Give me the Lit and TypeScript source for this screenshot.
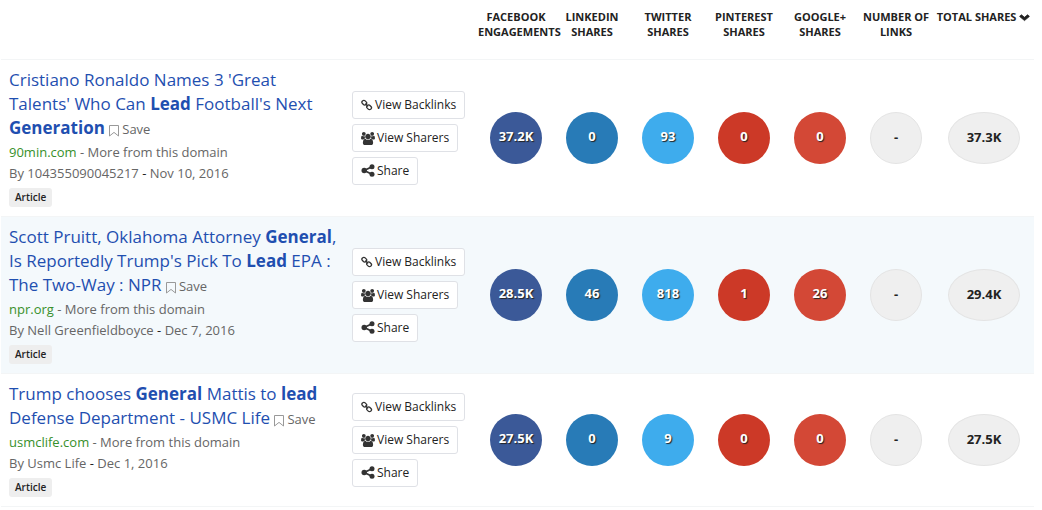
import { LitElement, html, css, svg } from "lit";
import { customElement, property } from "lit/decorators.js";

interface Story {
  title: Array<string | { hit: string }>;
  domain: string;
  author: string;
  date: string;
  shares: string[];
  links: string;
  total: string;
}

const NETWORKS = [
  { key: "facebook", label: "Facebook Engagements" },
  { key: "linkedin", label: "LinkedIn Shares" },
  { key: "twitter", label: "Twitter Shares" },
  { key: "pinterest", label: "Pinterest Shares" },
  { key: "google", label: "Google+ Shares" },
];

const STORIES: Story[] = [
  {
    title: ["Cristiano Ronaldo Names 3 'Great Talents' Who Can ", { hit: "Lead" }, " Football's Next ", { hit: "Generation" }],
    domain: "90min.com",
    author: "104355090045217",
    date: "Nov 10, 2016",
    shares: ["37.2K", "0", "93", "0", "0"],
    links: "-",
    total: "37.3K",
  },
  {
    title: ["Scott Pruitt, Oklahoma Attorney ", { hit: "General" }, ", Is Reportedly Trump's Pick To ", { hit: "Lead" }, " EPA : The Two-Way : NPR"],
    domain: "npr.org",
    author: "Nell Greenfieldboyce",
    date: "Dec 7, 2016",
    shares: ["28.5K", "46", "818", "1", "26"],
    links: "-",
    total: "29.4K",
  },
  {
    title: ["Trump chooses ", { hit: "General" }, " Mattis to ", { hit: "lead" }, " Defense Department - USMC Life"],
    domain: "usmclife.com",
    author: "Usmc Life",
    date: "Dec 1, 2016",
    shares: ["27.5K", "0", "9", "0", "0"],
    links: "-",
    total: "27.5K",
  },
];

const ICONS = {
  bookmark: {
    box: "0 0 11 13",
    width: 11,
    height: 13,
    art: svg`<path d="M.5 1.500h9v10.500L5 8.400.5 12z" fill="none" stroke="#999" stroke-width="1"/>`,
  },
  link: {
    box: "0 0 12 12",
    width: 12,
    height: 12,
    art: svg`<g fill="none" stroke="#333" stroke-width="1.300" stroke-linecap="round">
      <rect x="-2.500" y="-1.900" width="5" height="3.800" rx="1.800" transform="translate(3.300 3.700) rotate(45)"/>
      <rect x="-2.500" y="-1.900" width="5" height="3.800" rx="1.800" transform="translate(8.100 8.300) rotate(45)"/>
      <path d="M4.700 5l2 2"/></g>`,
  },
  users: {
    box: "0 0 1920 1792",
    width: 14,
    height: 13,
    art: svg`<path fill="#333" d="M593 896q-162 5-265 128H194q-82 0-138-40.500T0 865q0-353 124-353 6 0 43.500 21t97.500 42.500T384 597q67 0 133-23-5 37-5 66 0 139 81 256zm1071 637q0 120-73 189.500t-194 69.500H523q-121 0-194-69.500T256 1533q0-53 3.500-103.500t14-109T300 1212t43-97.500 62-81 85.500-53.500T602 960q10 0 43 21.500t73 48 107 48 135 21.500 135-21.500 107-48 73-48 43-21.500q61 0 111.500 20t85.500 53.500 62 81 43 97.500 26.500 108.500 14 109 3.500 103.500zM640 256q0 106-75 181t-181 75-181-75-75-181 75-181T384 0t181 75 75 181zm704 384q0 159-112.500 271.500T960 1024 688.500 911.500 576 640t112.500-271.500T960 256t271.500 112.500T1344 640zm576 225q0 78-56 118.500t-138 40.500h-134q-103-123-265-128 81-117 81-256 0-29-5-66 66 23 133 23 59 0 119-21.500t97.500-42.500 43.500-21q124 0 124 353zm-128-609q0 106-75 181t-181 75-181-75-75-181 75-181 181-75 181 75 75 181z"/>`,
  },
  share: {
    box: "0 0 14 14",
    width: 14,
    height: 14,
    art: svg`<g fill="#333"><circle cx="3.200" cy="6.500" r="2.700"/><circle cx="11" cy="2.700" r="2.500"/><circle cx="11" cy="10.300" r="2.500"/></g>
      <path d="M11 2.700L3.200 6.500 11 10.300" fill="none" stroke="#333" stroke-width="1.800"/>`,
  },
  chevron: {
    box: "0 0 12 8",
    width: 12,
    height: 8,
    art: svg`<path d="M.6 2.400L2.400.8l3.100 2.500L8.600.8l1.800 1.600L5.500 6.600z" fill="#222" stroke="#222" stroke-width=".8" stroke-linejoin="round"/>`,
  },
};

const icon = (name: keyof typeof ICONS) => {
  const i = ICONS[name];
  return html`<svg class="icon ${name}" viewBox=${i.box} width=${i.width} height=${i.height} aria-hidden="true">${i.art}</svg>`;
};

@customElement("app-root")
export class AppRoot extends LitElement {
  @property({ attribute: false }) stories: Story[] = STORIES;

  static styles = css`
    :host {
      display: block;
      padding: 0 8px 0 1px;
      background: #fff;
      color: #222;
      font: 13px/21px "Open Sans", "Noto Sans", sans-serif;
    }
    a { text-decoration: none; color: inherit; }
    button { font: inherit; color: inherit; cursor: pointer; }
    table { width: 100%; border-spacing: 0; table-layout: fixed; }
    .col-actions { width: 134px; }
    .col-count { width: 76px; }
    .col-total { width: 100px; }
    th {
      height: 50px;
      padding: 9px 0 0;
      vertical-align: top;
      font-size: 11px;
      line-height: 15px;
      font-weight: 700;
      text-transform: uppercase;
    }
    .sort {
      padding: 0;
      border: 0;
      background: none;
      font-weight: 700;
      text-transform: uppercase;
      white-space: nowrap;
    }
    td { padding: 8px 0; border-top: 1px solid #f3f5f6; vertical-align: middle; }
    tbody tr:last-child td { border-bottom: 1px solid #f3f5f6; }
    tbody tr:nth-child(even) { background: #f4f9fc; }
    .story { padding: 8px 4px 9px 8px; }
    .title { margin: 0 0 2px; font-size: 17px; line-height: 24px; font-weight: 400; }
    .title a { color: #1f4fb0; }
    .save { padding: 0; border: 0; background: none; font-size: 13px; line-height: 20px; color: #666; white-space: nowrap; }
    .icon { vertical-align: middle; }
    .bookmark { margin-right: 2px; }
    .meta { margin: 0; color: #666; }
    .domain { color: #37902b; }
    .dash { color: #222; }
    .tag {
      display: block;
      width: fit-content;
      margin-top: 4px;
      padding: 0 6px;
      border-radius: 3px;
      background: #eee;
      font-size: 10px;
      line-height: 19px;
      font-weight: 600;
    }
    .actions { display: flex; flex-direction: column; align-items: flex-start; gap: 5px; padding-left: 8px; }
    .action {
      display: flex;
      align-items: center;
      gap: 2px;
      height: 28px;
      padding: 0 8px;
      border: 1px solid #dfe1e6;
      border-radius: 3px;
      background: #fff;
      font-size: 12px;
      line-height: 18px;
    }
    .bubble {
      display: block;
      box-sizing: border-box;
      width: 52px;
      height: 52px;
      margin: 0 auto;
      border-radius: 50%;
      font-size: 13px;
      line-height: 48px;
      font-weight: 700;
      text-align: center;
      color: #fff;
      text-shadow: 1px 1px 1px #222;
    }
    .facebook { background: #3b5998; }
    .linkedin { background: #287bb7; }
    .twitter { background: #3eaced; }
    .pinterest { background: #cc3927; }
    .google { background: #d34836; }
    .plain { border: 1px solid #e4e4e4; background: #efefef; color: #222; text-shadow: none; }
    .total { width: 72px; }
  `;

  private row(s: Story) {
    return html`<tr>
      <td class="story">
        <h2 class="title">
          <a href="#">${s.title.map((p) => (typeof p === "string" ? p : html`<b>${p.hit}</b>`))}</a>
          <button class="save">${icon("bookmark")}Save</button>
        </h2>
        <p class="meta"><a class="domain" href="#">${s.domain}</a> - <a href="#">More from this domain</a></p>
        <p class="meta"><a href="#">By ${s.author}</a> <span class="dash">-</span> ${s.date}</p>
        <span class="tag">Article</span>
      </td>
      <td>
        <div class="actions">
          <button class="action">${icon("link")}View Backlinks</button>
          <button class="action">${icon("users")}View Sharers</button>
          <button class="action">${icon("share")}Share</button>
        </div>
      </td>
      ${NETWORKS.map((n, i) => html`<td><span class="bubble ${n.key}">${s.shares[i]}</span></td>`)}
      <td><span class="bubble plain">${s.links}</span></td>
      <td><span class="bubble plain total">${s.total}</span></td>
    </tr>`;
  }

  render() {
    return html`<table>
      <colgroup>
        <col />
        <col class="col-actions" />
        <col class="col-count" span="6" />
        <col class="col-total" />
      </colgroup>
      <thead>
        <tr>
          <th></th>
          <th></th>
          ${NETWORKS.map((n) => html`<th scope="col">${n.label}</th>`)}
          <th scope="col">Number of Links</th>
          <th scope="col"><button class="sort">Total Shares ${icon("chevron")}</button></th>
        </tr>
      </thead>
      <tbody>
        ${this.stories.map((s) => this.row(s))}
      </tbody>
    </table>`;
  }
}
